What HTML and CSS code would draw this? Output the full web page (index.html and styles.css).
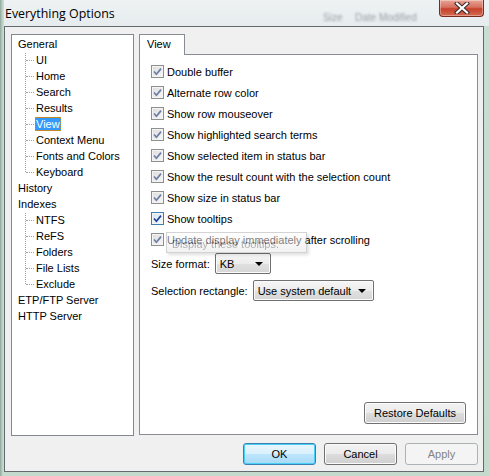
FILE: index.html
```html
<!DOCTYPE html>
<html>
<head>
<meta charset="utf-8">
<link rel="stylesheet" href="styles.css">
</head>
<body>
<div class="window">
  <div class="titlebar">
    <span class="title">Everything Options</span>
    <span class="ghost g1">Size</span>
    <span class="ghost g2">Date Modified</span>
    <div class="close">
      <svg width="18" height="12" viewBox="0 0 18 12"><path d="M4 1.5 L14 10.5 M14 1.5 L4 10.5" stroke="#3a2a2a" stroke-width="4.2" stroke-linecap="square"/><path d="M4 1.5 L14 10.5 M14 1.5 L4 10.5" stroke="#ffffff" stroke-width="2.2" stroke-linecap="square"/></svg>
    </div>
  </div>
  <div class="client">
    <div class="main">
      <div class="tree">
        <div class="item"><span class="label">General</span></div>
        <div class="group">
          <div class="item child"><span class="label">UI</span></div>
          <div class="item child"><span class="label">Home</span></div>
          <div class="item child"><span class="label">Search</span></div>
          <div class="item child"><span class="label">Results</span></div>
          <div class="item child"><span class="label selected">View</span></div>
          <div class="item child"><span class="label">Context Menu</span></div>
          <div class="item child"><span class="label">Fonts and Colors</span></div>
          <div class="item child"><span class="label">Keyboard</span></div>
        </div>
        <div class="item"><span class="label">History</span></div>
        <div class="item"><span class="label">Indexes</span></div>
        <div class="group">
          <div class="item child"><span class="label">NTFS</span></div>
          <div class="item child"><span class="label">ReFS</span></div>
          <div class="item child"><span class="label">Folders</span></div>
          <div class="item child"><span class="label">File Lists</span></div>
          <div class="item child"><span class="label">Exclude</span></div>
        </div>
        <div class="item"><span class="label">ETP/FTP Server</span></div>
        <div class="item"><span class="label">HTTP Server</span></div>
      </div>
      <div class="tabs">
        <div class="tabstrip"><div class="tab">View</div></div>
        <div class="panel">
          <div class="row"><span class="cb"><svg width="9" height="9" viewBox="0 0 9 9"><path d="M1 4.5 L3.4 7.2 L8 1.6" class="ck"/></svg></span><span>Double buffer</span></div>
          <div class="row"><span class="cb"><svg width="9" height="9" viewBox="0 0 9 9"><path d="M1 4.5 L3.4 7.2 L8 1.6" class="ck"/></svg></span><span>Alternate row color</span></div>
          <div class="row"><span class="cb"><svg width="9" height="9" viewBox="0 0 9 9"><path d="M1 4.5 L3.4 7.2 L8 1.6" class="ck"/></svg></span><span>Show row mouseover</span></div>
          <div class="row"><span class="cb"><svg width="9" height="9" viewBox="0 0 9 9"><path d="M1 4.5 L3.4 7.2 L8 1.6" class="ck"/></svg></span><span>Show highlighted search terms</span></div>
          <div class="row"><span class="cb"><svg width="9" height="9" viewBox="0 0 9 9"><path d="M1 4.5 L3.4 7.2 L8 1.6" class="ck"/></svg></span><span>Show selected item in status bar</span></div>
          <div class="row"><span class="cb"><svg width="9" height="9" viewBox="0 0 9 9"><path d="M1 4.5 L3.4 7.2 L8 1.6" class="ck"/></svg></span><span>Show the result count with the selection count</span></div>
          <div class="row"><span class="cb"><svg width="9" height="9" viewBox="0 0 9 9"><path d="M1 4.5 L3.4 7.2 L8 1.6" class="ck"/></svg></span><span>Show size in status bar</span></div>
          <div class="row"><span class="cb hot"><svg width="9" height="9" viewBox="0 0 9 9"><path d="M1 4.5 L3.4 7.2 L8 1.6" class="ck"/></svg></span><span>Show tooltips</span></div>
          <div class="row"><span class="cb"><svg width="9" height="9" viewBox="0 0 9 9"><path d="M1 4.5 L3.4 7.2 L8 1.6" class="ck"/></svg></span><span>Update display immediately after scrolling</span></div>
          <div class="field f1"><span>Size format:</span><span class="select w1">KB<i class="arrow"></i></span></div>
          <div class="field f2"><span>Selection rectangle:</span><span class="select w2">Use system default<i class="arrow"></i></span></div>
          <div class="restore"><span class="btn wide">Restore Defaults</span></div>
          <div class="tooltip">Display these tooltips.</div>
        </div>
      </div>
    </div>
    <div class="buttons">
      <span class="btn ok">OK</span>
      <span class="btn">Cancel</span>
      <span class="btn disabled">Apply</span>
    </div>
  </div>
</div>
</body>
</html>
```
FILE: styles.css
```css
html, body {
  margin: 0;
  padding: 0;
  width: 489px;
  height: 476px;
  overflow: hidden;
}
body {
  font-family: "Liberation Sans", Arial, sans-serif;
  font-size: 11px;
  color: #000;
}
.window {
  width: 489px;
  height: 476px;
  background:
    linear-gradient(to right, #8ea79a 0, #b7cdc2 2px, #cfe0d7 4px, transparent 4px),
    linear-gradient(to bottom, #eef2f3 0, #e6ecee 26px, #c9ddd2 26px, #c3dacd 100%);
  position: relative;
}
.titlebar {
  height: 26px;
  position: relative;
  display: flex;
  align-items: center;
  padding-left: 5px;
}
.title {
  font-family: "Open Sans", "Noto Sans", sans-serif;
  font-size: 12.4px;
  color: #000;
  margin-top: 1px;
}
.ghost {
  position: absolute;
  top: 12px;
  font-size: 10px;
  color: #9aa2a6;
  filter: blur(1.2px);
}
.g1 { left: 323px; }
.g2 { left: 355px; }
.close {
  position: absolute;
  top: 0;
  left: 439px;
  width: 45px;
  height: 17px;
  border: 1px solid #7a2a1f;
  border-top: none;
  border-radius: 0 0 4px 4px;
  background: linear-gradient(to bottom, #e8a597 0, #d7705e 45%, #c7412c 55%, #d46a50 100%);
  box-shadow: inset 0 0 0 1px rgba(255,255,255,0.35);
  display: flex;
  align-items: center;
  justify-content: center;
  box-sizing: border-box;
}
.client {
  margin-left: 4px;
  width: 480px;
  box-sizing: border-box;
  border: 1px solid #646a6e;
  background: #f0f0f0;
  padding: 7px 5px 6px 6px;
  height: 446px;
}
.main {
  display: flex;
  gap: 5px;
  height: 402px;
}
.tree {
  width: 123px;
  height: 402px;
  box-sizing: border-box;
  border: 1px solid #828790;
  background: #fff;
  padding: 1px 0 0 5px;
}
.item {
  height: 16px;
  display: flex;
  align-items: center;
}
.label {
  display: inline-block;
  padding: 0 1px;
  line-height: 14px;
  height: 14px;
}
.selected {
  background: #3399ff;
  color: #fff;
  outline: 1px dotted #c8902a;
  outline-offset: -1px;
}
.group { position: relative; }
.group::before {
  content: "";
  position: absolute;
  left: 8px;
  top: 1px;
  bottom: 8px;
  border-left: 1px dotted #a0a0a0;
}
.child {
  padding-left: 18px;
  position: relative;
}
.child::before {
  content: "";
  position: absolute;
  left: 9px;
  top: 8px;
  width: 8px;
  border-top: 1px dotted #a0a0a0;
}
.tabs {
  width: 339px;
  display: flex;
  flex-direction: column;
}
.tabstrip {
  height: 20px;
  display: flex;
}
.tab {
  width: 46px;
  height: 21px;
  box-sizing: border-box;
  border: 1px solid #898c95;
  border-bottom: none;
  background: #fff;
  padding: 3px 0 0 7px;
  position: relative;
  z-index: 1;
}
.panel {
  height: 381px;
  box-sizing: border-box;
  border: 1px solid #898c95;
  background: #fff;
  padding: 6px 11px 10px 11px;
  display: flex;
  flex-direction: column;
  position: relative;
}
.row {
  height: 21px;
  display: flex;
  align-items: center;
  gap: 3px;
}
.cb {
  width: 13px;
  height: 13px;
  box-sizing: border-box;
  border: 1px solid #8e8f8f;
  background: linear-gradient(135deg, #dcdcdc 0, #ededed 60%, #f7f7f7 100%);
  box-shadow: inset 0 0 0 1px #f4f4f4;
  display: flex;
  align-items: center;
  justify-content: center;
}
.cb .ck {
  fill: none;
  stroke: #6d7ea3;
  stroke-width: 1.7;
}
.cb.hot {
  border-color: #3c7fb1;
  background: linear-gradient(135deg, #cfe6f6 0, #e6f3fb 60%, #f4fafd 100%);
}
.cb.hot .ck { stroke: #21409a; }
.field {
  display: flex;
  align-items: center;
  gap: 5px;
  height: 21px;
}
.f1 { margin-top: 3px; }
.f2 { margin-top: 6px; }
.select {
  height: 21px;
  box-sizing: border-box;
  border: 1px solid #707070;
  border-radius: 2px;
  background: linear-gradient(to bottom, #f6f6f6 0, #ececec 50%, #e0e0e0 51%, #d6d6d6 100%);
  box-shadow: inset 0 0 0 1px #fbfbfb;
  display: flex;
  align-items: center;
  padding-left: 4px;
  position: relative;
}
.w1 { width: 56px; }
.w2 { width: 121px; }
.arrow {
  position: absolute;
  right: 7px;
  top: 8px;
  width: 0;
  height: 0;
  border-left: 4px solid transparent;
  border-right: 4px solid transparent;
  border-top: 4px solid #000;
}
.restore {
  margin-top: auto;
  display: flex;
  justify-content: flex-end;
}
.btn {
  width: 73px;
  height: 22px;
  box-sizing: border-box;
  border: 1px solid #707070;
  border-radius: 3px;
  background: linear-gradient(to bottom, #f2f2f2 0, #ebebeb 50%, #dddddd 51%, #cfcfcf 100%);
  box-shadow: inset 0 0 0 1px #fcfcfc;
  display: flex;
  align-items: center;
  justify-content: center;
}
.btn.wide { width: 102px; }
.btn.ok {
  border-color: #3c7fb1;
  background: linear-gradient(to bottom, #eaf6fd 0, #d9f0fc 50%, #bee6fd 51%, #a7d9f5 100%);
  box-shadow: inset 0 0 0 1px #48d0f8;
}
.btn.disabled {
  border-color: #adb2b5;
  background: #f4f4f4;
  box-shadow: none;
  color: #838383;
}
.buttons {
  display: flex;
  justify-content: flex-end;
  gap: 8px;
  margin-top: 7px;
}
.tooltip {
  position: absolute;
  left: 26px;
  top: 177px;
  width: 141px;
  height: 21px;
  box-sizing: border-box;
  border: 1px solid #a8a8a8;
  background: linear-gradient(to bottom, #ffffff, #e6e6e6);
  box-shadow: 2px 2px 3px rgba(0,0,0,0.25);
  opacity: 0.5;
  color: #606060;
  padding: 5px 0 0 5px;
  line-height: 12px;
  pointer-events: none;
}
```
